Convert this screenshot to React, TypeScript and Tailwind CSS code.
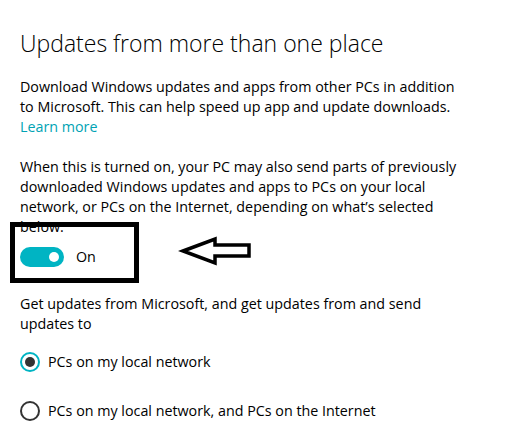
import React from "react";

const font = { fontFamily: '"Open Sans", "Noto Sans", sans-serif' };

function Radio({ checked, label }: { checked: boolean; label: string }) {
  return (
    <div className="flex items-center h-[20px]">
      <div
        className={
          checked
            ? "w-[20px] h-[20px] rounded-full border-2 border-[#00b4c3] flex items-center justify-center"
            : "w-[20px] h-[20px] rounded-full border-2 border-[#333333] flex items-center justify-center"
        }
      >
        {checked && <div className="w-[10px] h-[10px] rounded-full bg-[#333333]" />}
      </div>
      <span className="ml-[8px] text-[14.3px] leading-[20px] text-black whitespace-nowrap">{label}</span>
    </div>
  );
}

export default function App() {
  return (
    <div className="relative w-[509px] h-[433px] bg-white overflow-hidden" style={font}>
      <div className="pl-[20px] pt-[27px]">
        <h1 className="text-[23px] font-light leading-[32px] text-black whitespace-nowrap">
          Updates from more than one place
        </h1>
        <div className="mt-[18px] text-[14.3px] leading-[20px] text-black whitespace-nowrap">
          <div>Download Windows updates and apps from other PCs in addition</div>
          <div>to Microsoft. This can help speed up app and update downloads.</div>
          <div className="text-[#00a3b4]">Learn more</div>
        </div>
        <div className="mt-[20px] text-[14.3px] leading-[20px] text-black whitespace-nowrap">
          <div>When this is turned on, your PC may also send parts of previously</div>
          <div>downloaded Windows updates and apps to PCs on your local</div>
          <div>network, or PCs on the Internet, depending on what’s selected</div>
          <div>below.</div>
        </div>
        <div className="mt-[10px] flex items-center h-[20px]">
          <div className="w-[44px] h-[20px] rounded-full bg-[#00b4c3] flex items-center justify-end pr-[5px]">
            <div className="w-[10px] h-[10px] rounded-full bg-white" />
          </div>
          <span className="ml-[12px] text-[14.3px] leading-[20px] text-black">On</span>
        </div>
        <div className="mt-[27px] text-[14.3px] leading-[20px] text-black whitespace-nowrap">
          <div>Get updates from Microsoft, and get updates from and send</div>
          <div>updates to</div>
        </div>
        <div className="mt-[18px] flex flex-col gap-[29px]">
          <Radio checked label="PCs on my local network" />
          <Radio checked={false} label="PCs on my local network, and PCs on the Internet" />
        </div>
      </div>

      <div className="absolute left-[10px] top-[222px] w-[129px] h-[61px] border-[5px] border-black" />
      <svg className="absolute left-[178px] top-[234px]" width="76" height="34" viewBox="178 234 76 34">
        <polygon
          points="183,251 215,239 215,245 249,245 249,256 215,256 215,263"
          fill="none"
          stroke="black"
          strokeWidth="3.5"
          strokeLinejoin="miter"
        />
      </svg>
    </div>
  );
}
